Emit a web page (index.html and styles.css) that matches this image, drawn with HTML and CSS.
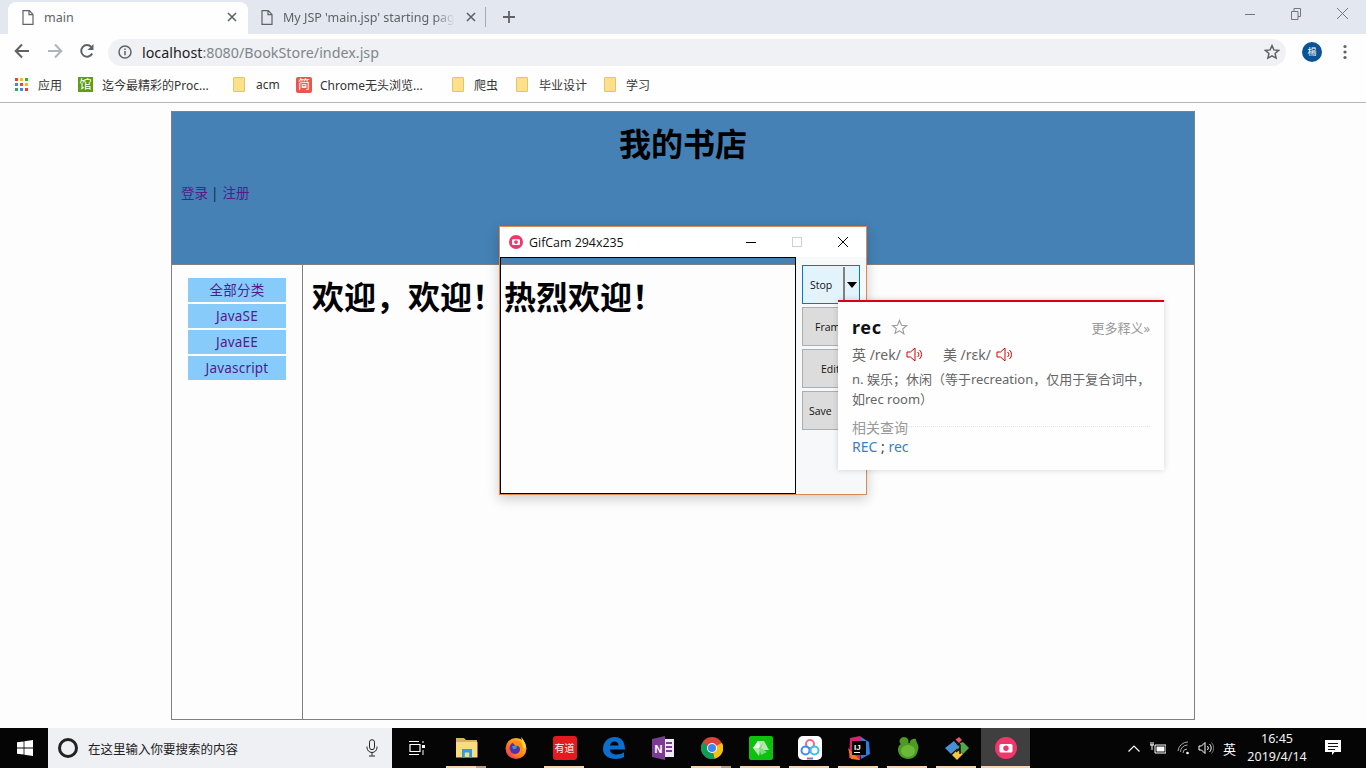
FILE: index.html
```html
<!DOCTYPE html>
<html lang="zh">
<head>
<meta charset="utf-8">
<title>main</title>
<link rel="stylesheet" href="styles.css">
</head>
<body>
<div class="browser">
  <div class="tabstrip">
    <div class="tab tab-active">
      <svg class="doc" viewBox="0 0 12 15" width="12" height="15"><path d="M1 .7h6.3L11 4.4v9.9H1z M7 .7v4h4" fill="none" stroke="#5f6368" stroke-width="1.2"/></svg>
      <span class="tab-title">main</span>
      <svg class="tab-x" viewBox="0 0 10 10" width="10" height="10"><path d="M1 1l8 8M9 1l-8 8" stroke="#5f6368" stroke-width="1.6"/></svg>
    </div>
    <div class="tab tab-other">
      <svg class="doc" viewBox="0 0 12 15" width="12" height="15"><path d="M1 .7h6.3L11 4.4v9.9H1z M7 .7v4h4" fill="none" stroke="#5f6368" stroke-width="1.2"/></svg>
      <span class="tab-title tab-fade">My JSP 'main.jsp' starting page</span>
      <svg class="tab-x" viewBox="0 0 10 10" width="10" height="10"><path d="M1 1l8 8M9 1l-8 8" stroke="#5f6368" stroke-width="1.6"/></svg>
    </div>
    <div class="tab-sep"></div>
    <svg class="tab-plus" viewBox="0 0 12 12" width="12" height="12"><path d="M6 0v12M0 6h12" stroke="#5f6368" stroke-width="1.8"/></svg>
    <div class="win-controls">
      <svg viewBox="0 0 10 10" width="10" height="10"><path d="M0 5.5h10" stroke="#777" stroke-width="1"/></svg>
      <svg viewBox="0 0 10 12" width="10" height="12"><path d="M.5 3.500h6.500v8H.5z M3 3.500V.5h6.500v8H7" fill="none" stroke="#777" stroke-width="1"/></svg>
      <svg viewBox="0 0 10 10" width="11" height="11"><path d="M0 0l10 10M10 0L0 10" stroke="#777" stroke-width=".9"/></svg>
    </div>
  </div>
  <div class="toolbar">
    <svg class="nav-icon" viewBox="0 0 16 16" width="16" height="16"><path d="M15 8H2M8 1.5L1.7 8 8 14.5" fill="none" stroke="#5f6368" stroke-width="2"/></svg>
    <svg class="nav-icon" viewBox="0 0 16 16" width="16" height="16"><path d="M1 8h13M8 1.5L14.3 8 8 14.5" fill="none" stroke="#b1b4b9" stroke-width="2"/></svg>
    <svg class="nav-icon nav-reload" viewBox="0 0 16 16" width="16" height="16"><path d="M13.2 10.500A5.800 5.800 0 1 1 12.300 4" fill="none" stroke="#5f6368" stroke-width="2"/><path d="M14.500 1v6h-6z" fill="#5f6368"/></svg>
    <div class="omnibox">
      <svg viewBox="0 0 14 14" width="14" height="14"><circle cx="7" cy="7" r="6" fill="none" stroke="#5f6368" stroke-width="1.5"/><path d="M7 6v4.300M7 3.400v1.500" stroke="#5f6368" stroke-width="1.5"/></svg>
      <span class="url"><span class="url-host">localhost</span>:8080/BookStore/index.jsp</span>
      <svg class="omni-star" viewBox="0 0 16 16" width="16" height="16"><path d="M8 1.600l1.900 4.300 4.700.5-3.500 3.100 1 4.600L8 11.800l-4.100 2.300 1-4.600L1.400 6.400l4.700-.5z" fill="none" stroke="#5f6368" stroke-width="1.500"/></svg>
    </div>
    <div class="avatar">楊</div>
    <svg class="kebab" viewBox="0 0 4 16" width="4" height="16"><circle cx="2" cy="2.500" r="1.600" fill="#5f6368"/><circle cx="2" cy="8" r="1.600" fill="#5f6368"/><circle cx="2" cy="13.500" r="1.600" fill="#5f6368"/></svg>
  </div>
  <div class="bookmarks">
    <div class="bm bm-apps">
      <svg viewBox="0 0 13 13" width="13" height="13"><g><rect width="3" height="3" fill="#e94235"/><rect x="5" width="3" height="3" fill="#fbbc04"/><rect x="10" width="3" height="3" fill="#34a853"/><rect y="5" width="3" height="3" fill="#4285f4"/><rect x="5" y="5" width="3" height="3" fill="#e94235"/><rect x="10" y="5" width="3" height="3" fill="#fbbc04"/><rect y="10" width="3" height="3" fill="#34a853"/><rect x="5" y="10" width="3" height="3" fill="#4285f4"/><rect x="10" y="10" width="3" height="3" fill="#e94235"/></g></svg>
      <span>应用</span>
    </div>
    <div class="bm bm-1"><span class="fav fav-green">馆</span><span>迄今最精彩的Proc...</span></div>
    <div class="bm bm-2"><span class="folder"></span><span>acm</span></div>
    <div class="bm bm-3"><span class="fav fav-red">简</span><span>Chrome无头浏览...</span></div>
    <div class="bm bm-4"><span class="folder"></span><span>爬虫</span></div>
    <div class="bm bm-5"><span class="folder"></span><span>毕业设计</span></div>
    <div class="bm bm-6"><span class="folder"></span><span>学习</span></div>
  </div>
</div>

<main class="viewport">
  <div class="frame">
    <header class="site-head">
      <h1 class="site-title">我的书店</h1>
      <p class="site-links"><a class="link">登录</a><span class="pipe">|</span><a class="link">注册</a></p>
    </header>
    <div class="site-body">
      <nav class="side">
        <a class="cat">全部分类</a>
        <a class="cat">JavaSE</a>
        <a class="cat">JavaEE</a>
        <a class="cat">Javascript</a>
      </nav>
      <section class="content">
        <h1 class="welcome">欢迎，欢迎！热烈欢迎！</h1>
      </section>
    </div>
  </div>
</main>

<div class="gifcam">
  <div class="gc-title">
    <svg viewBox="0 0 14 14" width="14" height="14"><circle cx="7" cy="7" r="7" fill="#f0366a"/><rect x="3" y="4.200" width="8" height="5.800" rx="1.200" fill="#fff"/><circle cx="7" cy="7.100" r="1.900" fill="#f0366a"/></svg>
    <span class="gc-name">GifCam 294x235</span>
    <div class="gc-controls">
      <svg viewBox="0 0 10 10" width="10" height="10"><path d="M0 5.500h10" stroke="#000" stroke-width="1"/></svg>
      <svg viewBox="0 0 10 10" width="10" height="10"><rect x=".5" y=".5" width="9" height="9" fill="none" stroke="#d0d0d0"/></svg>
      <svg viewBox="0 0 10 10" width="10" height="10"><path d="M0 0l10 10M10 0L0 10" stroke="#000" stroke-width="1"/></svg>
    </div>
  </div>
  <div class="gc-body">
    <div class="gc-hole"></div>
    <div class="gc-panel">
      <div class="gc-btn gc-stop"><span class="gc-stop-label">Stop</span><span class="gc-split"></span><span class="gc-arrow"></span></div>
      <div class="gc-btn gc-frame">Frame</div>
      <div class="gc-btn gc-edit">Edit</div>
      <div class="gc-btn gc-save">Save</div>
    </div>
  </div>
</div>

<aside class="dict">
  <div class="dict-head">
    <span class="dict-word">rec</span>
    <svg viewBox="0 0 16 16" width="17" height="17"><path d="M8 1.400l1.900 4.500 4.800.4-3.700 3.100 1.200 4.700L8 11.100l-4.200 2.500L5 8.900 1.300 6.300l4.800-.4z" fill="none" stroke="#999" stroke-width="1"/></svg>
    <span class="dict-more">更多释义»</span>
  </div>
  <div class="dict-phon">
    <span>英 /rek/</span>
    <svg viewBox="0 0 17 15" width="17" height="15"><path d="M1 5h3.500L9 1v13L4.500 10H1z M11.500 5a3 3 0 0 1 0 5 M13.500 3a6 6 0 0 1 0 9" fill="none" stroke="#d00" stroke-width="1"/></svg>
    <span class="dict-us">美 /rɛk/</span>
    <svg viewBox="0 0 17 15" width="17" height="15"><path d="M1 5h3.500L9 1v13L4.500 10H1z M11.500 5a3 3 0 0 1 0 5 M13.500 3a6 6 0 0 1 0 9" fill="none" stroke="#d00" stroke-width="1"/></svg>
  </div>
  <p class="dict-def">n. 娱乐；休闲（等于recreation，仅用于复合词中，如rec room）</p>
  <div class="dict-rel"><span>相关查询</span><i class="dict-dots"></i></div>
  <div class="dict-links"><a class="dict-link">REC</a> ; <a class="dict-link">rec</a></div>
</aside>

<footer class="taskbar">
  <div class="start">
    <svg viewBox="0 0 16 16" width="16" height="16"><path d="M0 2.300l6.600-.9v6.200H0zM7.400 1.300L16 0v7.600H7.400zM0 8.400h6.600v6.200L0 13.700zM7.400 8.400H16V16l-8.600-1.300z" fill="#fff"/></svg>
  </div>
  <div class="search">
    <span class="cortana"></span>
    <span class="search-text">在这里输入你要搜索的内容</span>
    <svg class="mic" viewBox="0 0 12 18" width="12" height="18"><rect x="3.500" y=".7" width="5" height="10" rx="2.500" fill="none" stroke="#222"/><path d="M1 7.500v1a5 5 0 0 0 10 0v-1M6 13.500v3M3 17h6" fill="none" stroke="#222"/></svg>
  </div>
  <div class="taskview">
    <svg viewBox="0 0 16 16" width="16" height="16"><path d="M0 1.500h10M0 14.500h10M1 4.500h10v7H1z" fill="none" stroke="#fff" stroke-width="1.200"/><rect x="13" y="5" width="3" height="3" fill="#fff"/><rect x="13.500" y="1" width="1" height="2" fill="#fff"/><rect x="13.500" y="10" width="1" height="5" fill="#fff"/></svg>
  </div>
  <div class="apps">
    <div class="app app-on app-on2"><svg viewBox="0 0 22 22" width="22" height="22"><path d="M0 1h8l2 2h11v4H0z" fill="#d9b35f"/><path d="M0 5h21.500v15.500H0z" fill="#f9dc7d"/><path d="M6 12h10v8.500h-2.800v-5H8.800v5H6z" fill="#2aa0de"/></svg></div>
    <div class="app"><svg viewBox="0 0 22 22" width="22" height="22"><defs><linearGradient id="fx" x1="1" y1="0" x2="0" y2="1"><stop offset="0" stop-color="#ffd43a"/><stop offset=".5" stop-color="#ff8a14"/><stop offset="1" stop-color="#e5256b"/></linearGradient></defs><circle cx="11" cy="11.500" r="10.500" fill="url(#fx)"/><path d="M16 0c2 2 5 6 5 11h-3c0-4-1-8-2-11z" fill="#ffd43a"/><circle cx="10.500" cy="11" r="6" fill="#5a2ea6"/><path d="M6 5c3-2 7-2 10 1 2 3 2 8-1 11-2 2-5 2-7 1 3 0 7-2 7-6 0-2-2-4-5-3l-1-2-3-2z" fill="#ff8a14"/><path d="M7 9h5l-1 3H8z" fill="#3f8ee0"/></svg></div>
    <div class="app app-on"><span class="yd">有道</span></div>
    <div class="app"><svg viewBox="0 0 22 22" width="22" height="22"><path d="M0 12C0 5 5 0 11.500 0 18 0 22 4.500 22 12.500H7c0 3.500 3 5 6.500 5 3 0 5.500-1 7.500-2.300V20c-2 1.300-5 2-8 2C5 22 0 18 0 12zM7 8.500h8.500C15.500 6 14 4.500 11.500 4.500S7.500 6 7 8.500z" fill="#0a6fd0"/></svg></div>
    <div class="app"><svg viewBox="0 0 22 24" width="22" height="24"><path d="M0 3l13-3v24L0 21z" fill="#7a3b93"/><path d="M13 3h9v18h-9z" fill="#f0e8f4"/><path d="M14 7h6M14 11h6M14 15h6" stroke="#7a3b93" stroke-width="2"/><text x="2.500" y="16.500" class="on-n">N</text></svg></div>
    <div class="app app-on app-on2"><svg viewBox="0 0 22 22" width="22" height="22"><circle cx="11" cy="11" r="11" fill="#db4437"/><path d="M11 11L21 6a11 11 0 0 1-7.500 15.700z" fill="#f4c20d"/><path d="M11 11l2.500 10.700A11 11 0 0 1 1.500 5.500z" fill="#0f9d58"/><circle cx="11" cy="11" r="5" fill="#fff"/><circle cx="11" cy="11" r="4" fill="#4285f4"/></svg></div>
    <div class="app app-on"><svg viewBox="0 0 24 24" width="24" height="24"><rect width="24" height="24" rx="2" fill="#0cc20c"/><path d="M9 5h6l5 9h-9l-1 6-6-8z" fill="#b5e8b0"/><path d="M9 5l3 7-8 0z" fill="#eef9ec"/><path d="M15 5l-3 7 6 4-6 3-2-7z" fill="#7fd87a"/></svg></div>
    <div class="app app-on"><svg viewBox="0 0 24 24" width="24" height="24"><rect width="24" height="24" rx="5" fill="#fff"/><circle cx="12" cy="8" r="4" fill="none" stroke="#f06a8a" stroke-width="2"/><circle cx="7.500" cy="14.500" r="4" fill="none" stroke="#3a8ff0" stroke-width="2"/><circle cx="16.500" cy="14.500" r="4" fill="none" stroke="#3ac0f0" stroke-width="2"/><rect x="9" y="21.500" width="3" height="2" fill="#f04a7a"/><rect x="12" y="21.500" width="3" height="2" fill="#3a8ff0"/></svg></div>
    <div class="app app-on"><svg viewBox="0 0 24 24" width="24" height="24"><path d="M3 2l10-2 3 3-3 21-11-2z" fill="#d6246e"/><path d="M14 1l8 5 1 12-9 5z" fill="#2a7de1"/><path d="M1 12l3 11 9 1z" fill="#f97a12"/><rect x="5" y="5" width="14" height="14" fill="#000"/><text x="7" y="14" class="ij">IJ</text><rect x="7" y="16" width="6" height="1" fill="#fff"/></svg></div>
    <div class="app app-on"><svg viewBox="0 0 24 24" width="24" height="24"><path d="M2 14c0-3 1-5 3-6C2 6 4 1 8 1c3 0 5 3 5 5 2-3 5-4 7-3-1 2 4 6 2 11-1 6-5 9-10 9S2 19 2 14z" fill="#4f9a22"/><ellipse cx="12" cy="15" rx="7" ry="6" fill="#6cb83a"/><path d="M14 2l-1 5" stroke="#0a0a0a" stroke-width="1.500"/></svg></div>
    <div class="app app-on"><svg viewBox="0 0 24 24" width="24" height="24"><path d="M10 4l4-3 3 3-4 4z" fill="#e8566b"/><path d="M9 6l-9 7 6 6 8-7z" fill="#4a90d9" transform="translate(0 -1)"/><path d="M12 14l-5 5 5 5 6-6z" fill="#f4c542"/><path d="M15 7l-3 6 6 5 6-6-6-6z" fill="#55a84a"/><path d="M10 4l5 5v9M15 12l-4 4" fill="none" stroke="#111" stroke-width="1.500"/></svg></div>
    <div class="app app-on app-active"><svg viewBox="0 0 22 22" width="22" height="22"><circle cx="11" cy="11" r="11" fill="#f0366a"/><rect x="4.500" y="7" width="13" height="8.500" rx="1.500" fill="#fff"/><circle cx="11" cy="11.200" r="2.700" fill="#f0366a"/></svg></div>
  </div>
  <div class="tray">
    <svg class="t-up" viewBox="0 0 12 7" width="12" height="7"><path d="M.5 6.500L6 1l5.500 5.500" fill="none" stroke="#fff" stroke-width="1.200"/></svg>
    <svg class="t-bat" viewBox="0 0 16 12" width="16" height="12"><path d="M5 3h11v8H5z" fill="none" stroke="#fff"/><path d="M6.500 4.500h8v5h-8z" fill="#fff"/><path d="M0 3h4M1 0v3M3 0v3M2 3v5" stroke="#fff"/></svg>
    <svg class="t-wifi" viewBox="0 0 14 14" width="14" height="14"><path d="M1 10a10 10 0 0 1 10-9M3.500 11a7 7 0 0 1 7-7M6 12a4 4 0 0 1 4-4" fill="none" stroke="#aaa" stroke-width="1"/><circle cx="10.500" cy="12" r="1.300" fill="#fff"/></svg>
    <svg class="t-vol" viewBox="0 0 16 14" width="16" height="14"><path d="M1 5h2.500L7 1.500v11L3.500 9H1z" fill="none" stroke="#fff"/><path d="M9.500 5a3 3 0 0 1 0 4M11.500 3a5.500 5.500 0 0 1 0 8" fill="none" stroke="#fff"/><path d="M13.500 1.500a8 8 0 0 1 0 11" fill="none" stroke="#777"/></svg>
    <span class="t-ime">英</span>
    <div class="t-clock"><span>16:45</span><span>2019/4/14</span></div>
    <svg class="t-note" viewBox="0 0 16 16" width="16" height="16"><path d="M0 0h16v12H9.500L7 15V12H0z" fill="#fff"/><path d="M3 3.500h10M3 6.500h10M3 9.500h7" stroke="#111"/></svg>
  </div>
</footer>
</body>
</html>
```
FILE: styles.css
```css
* { box-sizing: border-box; }
html, body { margin: 0; padding: 0; height: 100%; }
body {
  width: 1366px;
  height: 768px;
  overflow: hidden;
  display: flex;
  flex-direction: column;
  background: #fdfdfd;
  font-family: "Noto Sans", "Noto Sans CJK SC", sans-serif;
  position: relative;
}
svg { display: block; flex: none; }

/* browser chrome */
.browser { height: 103px; flex: none; border-bottom: 1px solid #b4b4bc; background: #fefefe; }
.tabstrip {
  height: 34px;
  display: flex;
  align-items: flex-end;
  padding-left: 8px;
  background: #e3e7f0;
}
.tab {
  height: 32px;
  display: flex;
  align-items: center;
  padding-bottom: 2px;
  font-size: 12.500px;
  color: #5f6368;
}
.tab-active {
  width: 240px;
  padding-left: 14px;
  padding-right: 11px;
  background: #fefefe;
  border-radius: 8px 8px 0 0;
}
.tab-other { width: 238px; padding-left: 13px; padding-right: 10px; }
.doc { margin-right: 10px; }
.tab-title { flex: 1; white-space: nowrap; overflow: hidden; min-width: 0; }
.tab-fade {
  margin-right: 5px;
  -webkit-mask-image: linear-gradient(to right, #000 88%, transparent);
  mask-image: linear-gradient(to right, #000 88%, transparent);
}
.tab-x { margin-left: 6px; }
.tab-sep { width: 1px; height: 20px; margin: 0 0 7px -1px; background: #a8abb2; }
.tab-plus { margin: 0 0 11px 17px; }
.win-controls {
  margin-left: auto;
  height: 34px;
  display: flex;
  align-items: center;
  gap: 36px;
  padding: 0 18px 7px 0;
}

.toolbar {
  height: 34px;
  display: flex;
  align-items: center;
  padding-left: 14px;
  gap: 17px;
}
.nav-reload { margin-left: -1px; }
.omnibox {
  width: 1178px;
  height: 27px;
  margin: 2px 0 0 -4px;
  padding: 0 6px 0 10px;
  display: flex;
  align-items: center;
  gap: 10px;
  background: #eff1f4;
  border-radius: 14px;
  font-size: 14.300px;
  color: #80868b;
}
.url-host { color: #222; }
.omni-star { margin-left: auto; }
.avatar {
  width: 20px;
  height: 20px;
  margin: 2px 0 0 -1px;
  border-radius: 50%;
  background: #0b5394;
  color: #fff;
  font-size: 9px;
  line-height: 20px;
  text-align: center;
}
.kebab { margin: 2px 0 0 4px; }

.bookmarks {
  height: 34px;
  display: flex;
  align-items: center;
  padding: 0 0 1px 15px;
  font-size: 12px;
  color: #333;
}
.bm { display: flex; align-items: center; white-space: nowrap; }
.bm-apps { width: 63px; gap: 10px; }
.bm-1 { width: 155px; gap: 9px; }
.bm-2 { width: 63px; gap: 11px; }
.bm-3 { width: 156px; gap: 8px; }
.bm-4 { width: 64px; gap: 10px; }
.bm-5 { width: 88px; gap: 11px; }
.bm-6 { gap: 10px; }
.fav {
  width: 15px;
  height: 15px;
  display: block;
  color: #fff;
  font-size: 12px;
  line-height: 15px;
  text-align: center;
}
.fav-green { background: #5f9e0f; }
.fav-red { width: 16px; height: 16px; line-height: 16px; background: #e25a4c; border-radius: 2px; }
.folder {
  width: 12px;
  height: 15px;
  display: block;
  background: #fde08a;
  border: 1px solid #e5c36a;
  border-radius: 1px;
}

/* the page */
.viewport { flex: 1; min-height: 0; padding: 8px 171px; }
.frame {
  height: 100%;
  display: flex;
  flex-direction: column;
  border: 1px solid #808080;
}
.site-head {
  height: 153px;
  flex: none;
  padding: 14px 9px 0;
  background: #4581b5;
  border-bottom: 1px solid #808080;
}
.site-title {
  margin: 0;
  font-size: 32px;
  line-height: 36px;
  font-weight: 700;
  text-align: center;
  color: #000;
}
.site-links { margin: 21px 0 0; font-size: 13.500px; line-height: 20px; color: #0d2a52; }
.link { color: #551a8b; }
.pipe { margin: 0 4px 0 3px; }
.site-body { flex: 1; display: flex; min-height: 0; }
.side {
  width: 131px;
  flex: none;
  padding: 13px 16px 0;
  display: flex;
  flex-direction: column;
  gap: 2px;
  border-right: 1px solid #808080;
}
.cat {
  width: 98px;
  height: 24px;
  background: #87cbfb;
  color: #551a8b;
  font-size: 13.500px;
  line-height: 24px;
  text-align: center;
  letter-spacing: .2px;
}
.content { flex: 1; padding: 12px 9px; }
.welcome { margin: 0; font-size: 32px; line-height: 40px; font-weight: 700; color: #000; white-space: nowrap; }

/* GifCam window */
.gifcam {
  position: absolute;
  left: 499px;
  top: 226px;
  width: 368px;
  height: 269px;
  display: flex;
  flex-direction: column;
  border: 1px solid #dd8a52;
  box-shadow: 0 4px 12px rgba(0, 0, 0, .2);
}
.gc-title {
  height: 30px;
  flex: none;
  display: flex;
  align-items: center;
  padding: 0 18px 0 9px;
  background: #fff;
  font-family: "Open Sans", "Noto Sans", sans-serif;
  font-size: 12.400px;
  color: #111;
}
.gc-name { margin-left: 6px; }
.gc-controls { margin-left: auto; display: flex; gap: 36px; }
.gc-body { flex: 1; display: flex; min-height: 0; }
.gc-hole { width: 296px; flex: none; border: 1px solid #000; }
.gc-panel {
  flex: 1;
  background: #f6f8fa;
  padding: 8px 6px 0;
  display: flex;
  flex-direction: column;
  gap: 3px;
}
.gc-btn {
  width: 58px;
  height: 39px;
  display: flex;
  align-items: center;
  background: #dcdcdc;
  border: 1px solid #adadad;
  font-family: "Open Sans", "Noto Sans", sans-serif;
  font-size: 10.500px;
  color: #111;
}
.gc-stop { background: #e3f3fb; border-color: #0078d7; }
.gc-stop-label { width: 40px; padding-right: 4px; text-align: center; }
.gc-split { width: 2px; height: 36px; background: #808080; }
.gc-arrow {
  margin-left: 2px;
  width: 0;
  height: 0;
  border: 5.500px solid transparent;
  border-top: 6px solid #000;
  border-bottom: 0;
}
.gc-frame { padding-left: 12px; }
.gc-edit { padding-left: 18px; }
.gc-save { padding-left: 6px; }

/* Dictionary popup */
.dict {
  position: absolute;
  left: 838px;
  top: 300px;
  width: 326px;
  height: 170px;
  padding: 13px 14px 0;
  background: #fefefe;
  border-top: 2px solid #d9000f;
  box-shadow: 0 0 6px rgba(0, 0, 0, .16);
  font-size: 13px;
  color: #666;
}
.dict-head { height: 24px; display: flex; align-items: center; gap: 9px; }
.dict-word { font-size: 18px; font-weight: 700; letter-spacing: .6px; color: #111; }
.dict-more { margin-left: auto; font-size: 13px; color: #999; }
.dict-phon { height: 20px; margin-top: 5px; display: flex; align-items: center; gap: 5px; font-size: 14px; }
.dict-us { margin-left: 15px; }
.dict-def { margin: 6px -8px 0 0; line-height: 19.500px; }
.dict-rel { margin-top: 9px; height: 19px; display: flex; align-items: center; font-size: 14px; color: #999; line-height: 19px; }
.dict-dots { flex: 1; border-top: 1px dotted #e4e4e4; margin-top: -3px; }
.dict-links { font-size: 14px; line-height: 19px; color: #333; }
.dict-link { color: #3a7fc8; }

/* Taskbar */
.taskbar {
  height: 40px;
  flex: none;
  display: flex;
  align-items: stretch;
  background: #050505;
  color: #fff;
}
.start { width: 48px; display: flex; align-items: center; justify-content: center; padding-left: 2px; }
.search {
  width: 344px;
  display: flex;
  align-items: center;
  padding: 0 14px 0 10px;
  background: #eef0f4;
  color: #222;
  font-size: 12.500px;
}
.cortana { width: 20px; height: 20px; border: 3px solid #222; border-radius: 50%; }
.search-text { margin-left: 10px; }
.mic { margin-left: auto; }
.taskview { width: 50px; display: flex; align-items: center; justify-content: center; }
.apps { display: flex; }
.app {
  width: 49px;
  position: relative;
  display: flex;
  align-items: center;
  justify-content: center;
}
.app-on::after {
  content: "";
  position: absolute;
  left: 4px;
  right: 5px;
  bottom: 0;
  height: 2px;
  background: #f8d3ad;
}
.app-on2::after { background: linear-gradient(to right, #f8d3ad 75%, #b89c86 75%); }
.app-active { background: #3f3f3f; }
.app-active::after { left: 0; right: 0; }
.yd {
  width: 24px;
  height: 24px;
  border-radius: 3px;
  background: #e31b1f;
  color: #fff;
  font-size: 10px;
  line-height: 24px;
  text-align: center;
  white-space: nowrap;
}
.on-n { font-family: "Liberation Sans", sans-serif; font-size: 11px; font-weight: 700; fill: #fff; }
.ij { font-family: "Liberation Sans", sans-serif; font-size: 8px; font-weight: 700; fill: #fff; }
.tray { flex: 1; display: flex; align-items: center; padding-left: 98px; }
.t-bat { margin-left: 10px; }
.t-wifi { margin-left: 11px; }
.t-vol { margin-left: 7px; }
.t-ime { margin-left: 9px; font-size: 13px; }
.t-clock {
  width: 70px;
  margin-left: 6px;
  display: flex;
  flex-direction: column;
  align-items: center;
  font-size: 12.500px;
  line-height: 18px;
  color: #f2f2f2;
}
.t-note { margin-left: 13px; }
```
